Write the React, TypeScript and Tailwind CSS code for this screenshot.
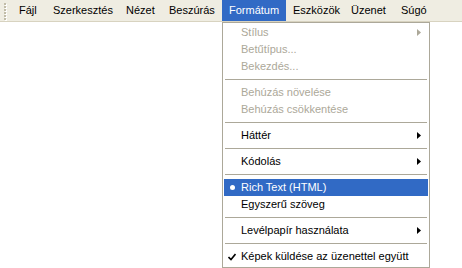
import React from 'react';

type MenuEntry =
    | { kind: 'sep' }
    | { kind: 'item'; label: string; disabled?: boolean; submenu?: boolean; active?: boolean; mark?: 'bullet' | 'check' };

const menuBar = [
    { label: 'Fájl', w: 'w-[34px]' },
    { label: 'Szerkesztés', w: 'w-[73px]' },
    { label: 'Nézet', w: 'w-[43px]' },
    { label: 'Beszúrás', w: 'w-[60px]' },
    { label: 'Formátum', w: 'w-[64px]', open: true },
    { label: 'Eszközök', w: 'w-[58px]' },
    { label: 'Üzenet', w: 'w-[50px]' },
    { label: 'Súgó', w: 'w-[40px]' },
];

const entries: MenuEntry[] = [
    { kind: 'item', label: 'Stílus', disabled: true, submenu: true },
    { kind: 'item', label: 'Betűtípus...', disabled: true },
    { kind: 'item', label: 'Bekezdés...', disabled: true },
    { kind: 'sep' },
    { kind: 'item', label: 'Behúzás növelése', disabled: true },
    { kind: 'item', label: 'Behúzás csökkentése', disabled: true },
    { kind: 'sep' },
    { kind: 'item', label: 'Háttér', submenu: true },
    { kind: 'sep' },
    { kind: 'item', label: 'Kódolás', submenu: true },
    { kind: 'sep' },
    { kind: 'item', label: 'Rich Text (HTML)', active: true, mark: 'bullet' },
    { kind: 'item', label: 'Egyszerű szöveg' },
    { kind: 'sep' },
    { kind: 'item', label: 'Levélpapír használata', submenu: true },
    { kind: 'sep' },
    { kind: 'item', label: 'Képek küldése az üzenettel együtt', mark: 'check' },
];

function Arrow({ color }: { color: string }) {
    return (
        <svg width="4" height="7" viewBox="0 0 4 7" className="absolute right-[7px] top-[5px]">
            <path d="M0 0 L4 3.5 L0 7 Z" fill={color} />
        </svg>
    );
}

function Grip() {
    return (
        <div className="flex flex-col gap-[1px] pt-[3px] pl-[4px] w-[12px]">
            {[0, 1, 2, 3, 4, 5].map((i) => (
                <span key={i} className="block w-[2px] h-[2px] bg-[#c1bca8] shadow-[1px_1px_0_#fff]" />
            ))}
        </div>
    );
}

export default function App() {
    return (
        <div
            className="relative w-[462px] h-[268px] bg-white overflow-hidden text-[11px] text-black"
            style={{ fontFamily: '"Liberation Sans", Arial, sans-serif' }}
        >
            {/* Menu bar */}
            <div className="flex h-[22px] bg-[#efede2] border-b border-[#d8d3c0]">
                <Grip />
                {menuBar.map((m) => (
                    <div
                        key={m.label}
                        className={`${m.w} h-[21px] pl-[7px] leading-[21px] whitespace-nowrap ${m.open ? 'bg-[#316ac5] text-white' : ''}`}
                    >
                        {m.label}
                    </div>
                ))}
            </div>

            {/* Dropdown */}
            <div className="absolute left-[222px] top-[22px] w-[208px] h-[246px] bg-white border border-[#aca899] px-[1px] pt-[1px] pb-[2px]">
                {entries.map((e, i) =>
                    e.kind === 'sep' ? (
                        <div key={i} className="h-[9px] pt-[4px] px-[1px]">
                            <div className="h-[1px] bg-[#aca899]" />
                        </div>
                    ) : (
                        <div
                            key={i}
                            className={`relative h-[17px] pl-[17px] leading-[17px] whitespace-nowrap ${
                                e.active ? 'bg-[#316ac5] text-white' : e.disabled ? 'text-[#aca899]' : 'text-black'
                            }`}
                        >
                            {e.mark === 'bullet' && (
                                <span className="absolute left-[6px] top-[6px] w-[5px] h-[5px] rounded-full bg-white" />
                            )}
                            {e.mark === 'check' && (
                                <svg width="8" height="8" viewBox="0 0 8 8" className="absolute left-[4px] top-[5px]">
                                    <path d="M0.5 4 L3 6.5 L7.5 1" fill="none" stroke="#000" strokeWidth="1.6" />
                                </svg>
                            )}
                            {e.label}
                            {e.submenu && <Arrow color={e.disabled ? '#aca899' : '#000'} />}
                        </div>
                    ),
                )}
            </div>
        </div>
    );
}
